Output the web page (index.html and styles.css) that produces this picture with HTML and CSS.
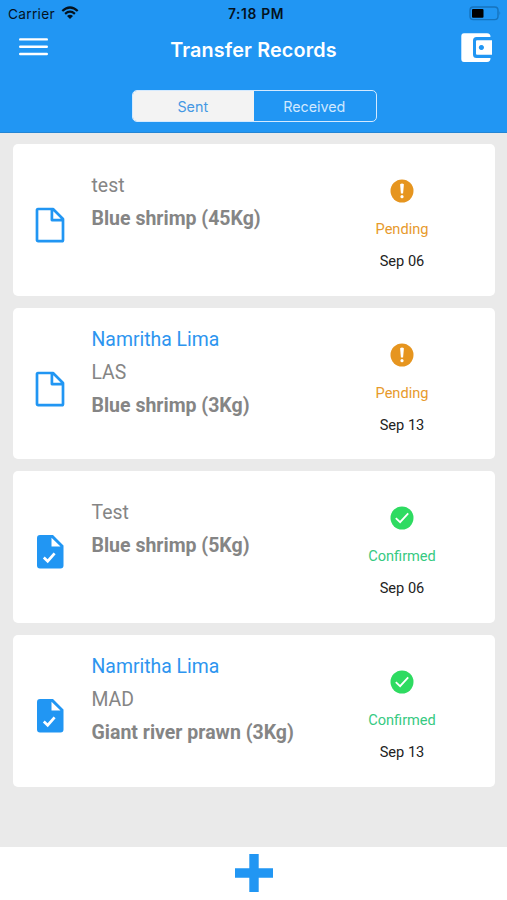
FILE: index.html
```html
<!DOCTYPE html>
<html lang="en">
<head>
<meta charset="utf-8">
<title>Transfer Records</title>
<link rel="stylesheet" href="styles.css">
</head>
<body>
<svg class="defs" width="0" height="0">
  <symbol id="file" viewBox="0 0 30 36"><path d="M3 2H18L28 12V33Q28 34.2 26.8 34.2H3.2Q2 34.2 2 33V3.2Q2 2 3.2 2Z M16.9 2V13.1H28" fill="none" stroke="currentColor" stroke-width="2.7" stroke-linejoin="round"/></symbol>
  <symbol id="file-done" viewBox="0 0 30 36"><path fill-rule="evenodd" fill="currentColor" d="M5 1H18L28.5 11.5V31.5Q28.5 34.5 25.5 34.5H5Q2 34.5 2 31.5V4Q2 1 5 1Z M16.5 3.7V12.5H25.5Z"/><path d="M8.8 23.5L12.7 27.2L19.6 19.4" fill="none" stroke="#fff" stroke-width="2.7"/></symbol>
  <symbol id="pending" viewBox="0 0 24 24"><circle cx="12" cy="12" r="11.5" fill="#e6951f"/><path d="M10.1 5.2Q12 3.9 13.9 5.2L13.1 14.4H10.9Z" fill="#fff"/><circle cx="12" cy="17.7" r="1.6" fill="#fff"/></symbol>
  <symbol id="confirmed" viewBox="0 0 24 24"><circle cx="12" cy="12" r="11.5" fill="#2edb61"/><path d="M5.8 12.2L10.1 16.2L18.2 7.4" fill="none" stroke="#fff" stroke-width="1.8"/></symbol>
</svg>
<div class="app">
  <header class="header">
    <div class="status-bar">
      <div class="carrier"><span>Carrier</span>
        <svg class="wifi" width="18" height="14" viewBox="0 0 18 14"><path d="M1.3 5Q9 -2 16.7 5M4.1 7.8Q9 3.5 13.9 7.8" fill="none" stroke="#04121e" stroke-width="2.2"/><path d="M6 10Q9 7.5 12 10L9 13Z" fill="#04121e"/></svg>
      </div>
      <div class="clock">7:18 PM</div>
      <svg class="battery" width="33" height="15" viewBox="0 0 33 15"><rect x="1" y="1" width="28" height="12.6" rx="3.3" fill="none" stroke="#1673bd" stroke-width="1.4"/><rect x="3" y="3" width="11.5" height="8.7" rx="1" fill="#000"/><path d="M30.5 5Q32.3 7.3 30.5 9.6Z" fill="#1673bd"/></svg>
    </div>
    <div class="nav">
      <svg class="menu" width="30" height="20" viewBox="0 0 30 20"><path d="M2.2 2.4H28.8M2.2 9.8H28.8M2.2 17H28.8" stroke="#fff" stroke-width="2.4" stroke-linecap="round"/></svg>
      <h1>Transfer Records</h1>
      <svg class="wallet" width="32" height="30" viewBox="0 0 32 30"><path d="M3 .3H26Q29.5 .3 29.5 4H15.5Q12 4 12 7.5V21.5Q12 25 15.5 25H29.5Q29.5 29 26 29H3Q.3 29 .3 26V3.3Q.3 .3 3 .3Z" fill="#fff"/><path fill-rule="evenodd" d="M16 7.2H31V21.7H16Q15 21.7 15 20.7V8.2Q15 7.2 16 7.2Z M20.4 11.9a2.6 2.6 0 1 0 .01 0Z" fill="#fff"/></svg>
    </div>
    <div class="tabs"><div class="tab active">Sent</div><div class="tab">Received</div></div>
  </header>
  <main class="list">
    <article class="card">
      <svg class="doc"><use href="#file"/></svg>
      <div class="info"><p>test</p><p class="item">Blue shrimp (45Kg)</p></div>
      <div class="state pending"><svg><use href="#pending"/></svg><span>Pending</span><time>Sep 06</time></div>
    </article>
    <article class="card">
      <svg class="doc"><use href="#file"/></svg>
      <div class="info named"><p class="name">Namritha Lima</p><p>LAS</p><p class="item">Blue shrimp (3Kg)</p></div>
      <div class="state pending"><svg><use href="#pending"/></svg><span>Pending</span><time>Sep 13</time></div>
    </article>
    <article class="card">
      <svg class="doc"><use href="#file-done"/></svg>
      <div class="info"><p>Test</p><p class="item">Blue shrimp (5Kg)</p></div>
      <div class="state confirmed"><svg><use href="#confirmed"/></svg><span>Confirmed</span><time>Sep 06</time></div>
    </article>
    <article class="card">
      <svg class="doc"><use href="#file-done"/></svg>
      <div class="info named"><p class="name">Namritha Lima</p><p>MAD</p><p class="item">Giant river prawn (3Kg)</p></div>
      <div class="state confirmed"><svg><use href="#confirmed"/></svg><span>Confirmed</span><time>Sep 13</time></div>
    </article>
  </main>
  <footer class="footer">
    <svg width="38" height="38" viewBox="0 0 38 38"><path d="M14.3 0H23.7V14.3H38V23.7H23.7V38H14.3V23.7H0V14.3H14.3Z" fill="#2196f3"/></svg>
  </footer>
</div>
</body>
</html>
```
FILE: styles.css
```css
* { box-sizing: border-box; margin: 0; padding: 0; }
body { font-family: Roboto, "Liberation Sans", sans-serif; }
svg { display: block; flex: none; }
.defs { display: none; }
.app { width: 507px; height: 900px; display: flex; flex-direction: column; overflow: hidden; background: #eaeaea; }
.header { height: 133px; flex: none; background: #2196f3; border-bottom: 1px solid #2385d4; }
.status-bar { height: 28px; display: grid; grid-template-columns: 1fr auto 1fr; align-items: center; padding: 0 5px 0 8px; font-family: Inter, sans-serif; color: #04121e; }
.carrier { display: flex; align-items: center; gap: 6.5px; font-size: 13.7px; letter-spacing: .3px; }
.wifi { margin-top: -2px; }
.clock { font-size: 13.8px; font-weight: 600; letter-spacing: .65px; padding-left: 2px; }
.battery { justify-self: end; margin-top: -2px; }
.nav { height: 62px; display: grid; grid-template-columns: 1fr auto 1fr; align-items: start; padding: 5px 14px 0 17px; }
.menu { margin-top: 4px; margin-left: 1px; }
.nav h1 { font-family: Inter, sans-serif; font-size: 19.8px; font-weight: 600; letter-spacing: .15px; line-height: 24px; color: #fff; margin: 5px 3px 0 0; }
.wallet { justify-self: end; }
.tabs { width: 245px; height: 32px; margin: 0 0 0 131.5px; display: flex; border: 1.5px solid #d4eaff; border-radius: 5px; overflow: hidden; }
.tab { flex: 1; text-align: center; line-height: 31px; font-family: Inter, sans-serif; font-size: 14.3px; color: #cfe8ff; padding-right: 1px; }
.tab.active { background: #f3f3f3; color: #4598e3; }
.list { flex: 1; display: flex; flex-direction: column; gap: 12.2px; padding: 11px 12px 0 13px; }
.card { height: 151.5px; display: grid; grid-template-columns: 78.5px 1fr 120px; background: #fff; border-radius: 5px; padding-right: 33px; }
.doc { width: 30px; height: 36px; margin: 63px 0 0 22px; }
.card, .doc { color: #2196f3; }
.info { padding-top: 24.5px; font-size: 19.4px; line-height: 33px; color: #858585; }
.info.named { padding-top: 15px; }
.info p { white-space: nowrap; }
.name { color: #2d95ef; }
.info .item { font-weight: 700; font-size: 19.5px; }
.state { display: flex; flex-direction: column; align-items: center; padding-top: 35px; font-size: 14.6px; line-height: 32px; }
.state svg { width: 24px; height: 24px; margin-bottom: 10px; }
.state.pending { color: #e79a2c; }
.state.confirmed { color: #36ca82; }
.state time { color: #222; }
.footer { height: 53px; flex: none; background: #fff; display: flex; justify-content: center; padding-top: 6.5px; }
```
